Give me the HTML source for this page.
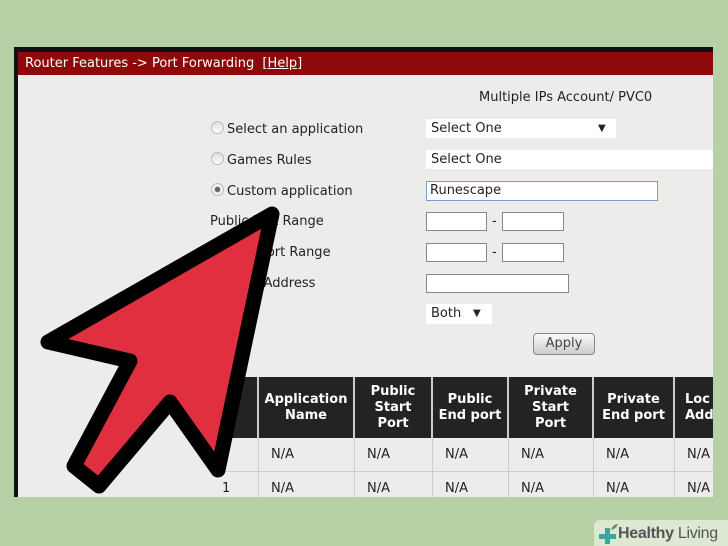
<!DOCTYPE html>
<html><head><meta charset="utf-8"><style>
*{margin:0;padding:0;box-sizing:border-box}
html{width:728px;height:546px;overflow:hidden}
body{width:728px;height:546px;background:#b8d0a5;position:relative;overflow:hidden;font-family:"DejaVu Sans","Liberation Sans",sans-serif;font-size:13px;color:#222}
.a{position:absolute}
#panel{left:14px;top:47px;width:699px;height:450px;background:#eeeceb;border-left:4px solid #111;border-top:5px solid #111}
#hdr{left:18px;top:52px;width:695px;height:23px;background:#8e0a0a;color:#fff;font-size:13px;line-height:23px;padding-left:7px}
#hdr u{margin-left:4px}
.lbl{font-size:13px;line-height:16px;white-space:nowrap}
.rad{width:13px;height:13px;border-radius:50%;border:1px solid #bbb;background:linear-gradient(#ddd,#fff)}
.box{background:#fff;border:1px solid #888}
.sel{background:#fff;font-size:13px;line-height:19px;padding-left:5px}
.th{background:#232323;color:#fff;font-weight:bold;font-size:13px;line-height:16px;text-align:center;display:flex;align-items:center;justify-content:center;border-right:2px solid #ccc}
.td{font-size:13px;line-height:16px;padding-left:12px;border-right:1px solid #ccc;border-bottom:1px solid #ccc}
</style></head><body>
<div class="a" id="panel"></div>
<div class="a" id="hdr">Router Features -&gt; Port Forwarding <u>[Help]</u></div>
<div class="a lbl" style="left:479px;top:90px">Multiple IPs Account/ PVC0</div>

<div class="a rad" style="left:211px;top:121px"></div>
<div class="a lbl" style="left:227px;top:122px">Select an application</div>
<div class="a rad" style="left:211px;top:152px"></div>
<div class="a lbl" style="left:227px;top:153px">Games Rules</div>
<div class="a rad" style="left:211px;top:183px;background:radial-gradient(circle,#666 0 2.5px,#eee 3px)"></div>
<div class="a lbl" style="left:227px;top:184px">Custom application</div>
<div class="a lbl" style="left:210px;top:214px">Public Port Range</div>
<div class="a lbl" style="left:210px;top:245px">Private Port Range</div>
<div class="a lbl" style="left:210px;top:276px">Local IP Address</div>

<div class="a sel" style="left:426px;top:119px;width:190px;height:19px">Select One<span style="position:absolute;left:172px;font-size:10px">▼</span></div>
<div class="a sel" style="left:426px;top:150px;width:287px;height:19px">Select One</div>
<div class="a box" style="left:426px;top:181px;width:232px;height:20px;border:1px solid #7a9cd3;padding-left:3px;line-height:18px">Runescape</div>
<div class="a box" style="left:426px;top:212px;width:61px;height:19px"></div>
<div class="a lbl" style="left:492px;top:214px">-</div>
<div class="a box" style="left:502px;top:212px;width:62px;height:19px"></div>
<div class="a box" style="left:426px;top:243px;width:61px;height:19px"></div>
<div class="a lbl" style="left:492px;top:245px">-</div>
<div class="a box" style="left:502px;top:243px;width:62px;height:19px"></div>
<div class="a box" style="left:426px;top:274px;width:143px;height:19px"></div>
<div class="a sel" style="left:426px;top:304px;width:66px;height:20px">Both<span style="position:absolute;left:47px;font-size:10px">▼</span></div>
<div class="a" style="left:533px;top:333px;width:62px;height:22px;border:1px solid #888;border-radius:4px;background:linear-gradient(#fafafa,#ccc);text-align:center;line-height:20px;color:#444">Apply</div>

<div class="a th" style="left:210px;top:377px;width:49px;height:61px">e</div>
<div class="a th" style="left:259px;top:377px;width:96px;height:61px">Application<br>Name</div>
<div class="a th" style="left:355px;top:377px;width:78px;height:61px">Public<br>Start<br>Port</div>
<div class="a th" style="left:433px;top:377px;width:76px;height:61px">Public<br>End port</div>
<div class="a th" style="left:509px;top:377px;width:85px;height:61px">Private<br>Start<br>Port</div>
<div class="a th" style="left:594px;top:377px;width:81px;height:61px">Private<br>End port</div>
<div class="a th" style="left:675px;top:377px;width:38px;height:61px;justify-content:flex-start;text-align:left;padding-left:10px;border-right:none;overflow:hidden;white-space:nowrap">Loc<br>Add</div>

<div class="a td" style="left:210px;top:438px;width:49px;height:34px;line-height:34px"></div>
<div class="a td" style="left:259px;top:438px;width:96px;height:34px;line-height:34px">N/A</div>
<div class="a td" style="left:355px;top:438px;width:78px;height:34px;line-height:34px">N/A</div>
<div class="a td" style="left:433px;top:438px;width:76px;height:34px;line-height:34px">N/A</div>
<div class="a td" style="left:509px;top:438px;width:85px;height:34px;line-height:34px">N/A</div>
<div class="a td" style="left:594px;top:438px;width:81px;height:34px;line-height:34px">N/A</div>
<div class="a td" style="left:675px;top:438px;width:38px;height:34px;line-height:34px;border-right:none">N/A</div>
<div class="a td" style="left:210px;top:472px;width:49px;height:25px;line-height:34px;border-bottom:none">1</div>
<div class="a td" style="left:259px;top:472px;width:96px;height:25px;line-height:34px;border-bottom:none">N/A</div>
<div class="a td" style="left:355px;top:472px;width:78px;height:25px;line-height:34px;border-bottom:none">N/A</div>
<div class="a td" style="left:433px;top:472px;width:76px;height:25px;line-height:34px;border-bottom:none">N/A</div>
<div class="a td" style="left:509px;top:472px;width:85px;height:25px;line-height:34px;border-bottom:none">N/A</div>
<div class="a td" style="left:594px;top:472px;width:81px;height:25px;line-height:34px;border-bottom:none">N/A</div>
<div class="a td" style="left:675px;top:472px;width:38px;height:25px;line-height:34px;border:none">N/A</div>
<div class="a" style="left:0;top:497px;width:728px;height:49px;background:#b8d0a5"></div>

<svg class="a" style="left:0;top:0" width="728" height="546">
<polygon points="272,214 48,342 130,361 74,466 99,486 170,402 218,470" fill="#e0303f" stroke="#000" stroke-width="15" stroke-linejoin="round"/>
</svg>

<div class="a" style="left:594px;top:520px;width:134px;height:26px;background:rgba(255,255,255,0.5);border-radius:6px 0 0 0"></div>
<svg class="a" style="left:597px;top:523px" width="22" height="22"><rect x="8" y="5" width="5" height="16" fill="#3aa6a0"/><rect x="2" y="11" width="17" height="5" fill="#3aa6a0"/><path d="M14 7 Q16 1 21 1 Q19 6 14 7Z" fill="#5a9a3a"/></svg>
<div class="a" style="left:618px;top:524px;font-family:'Liberation Sans',sans-serif;font-size:16px;letter-spacing:-0.3px;color:#555;line-height:20px;white-space:nowrap"><b>Healthy</b> Living</div>
</body></html>
